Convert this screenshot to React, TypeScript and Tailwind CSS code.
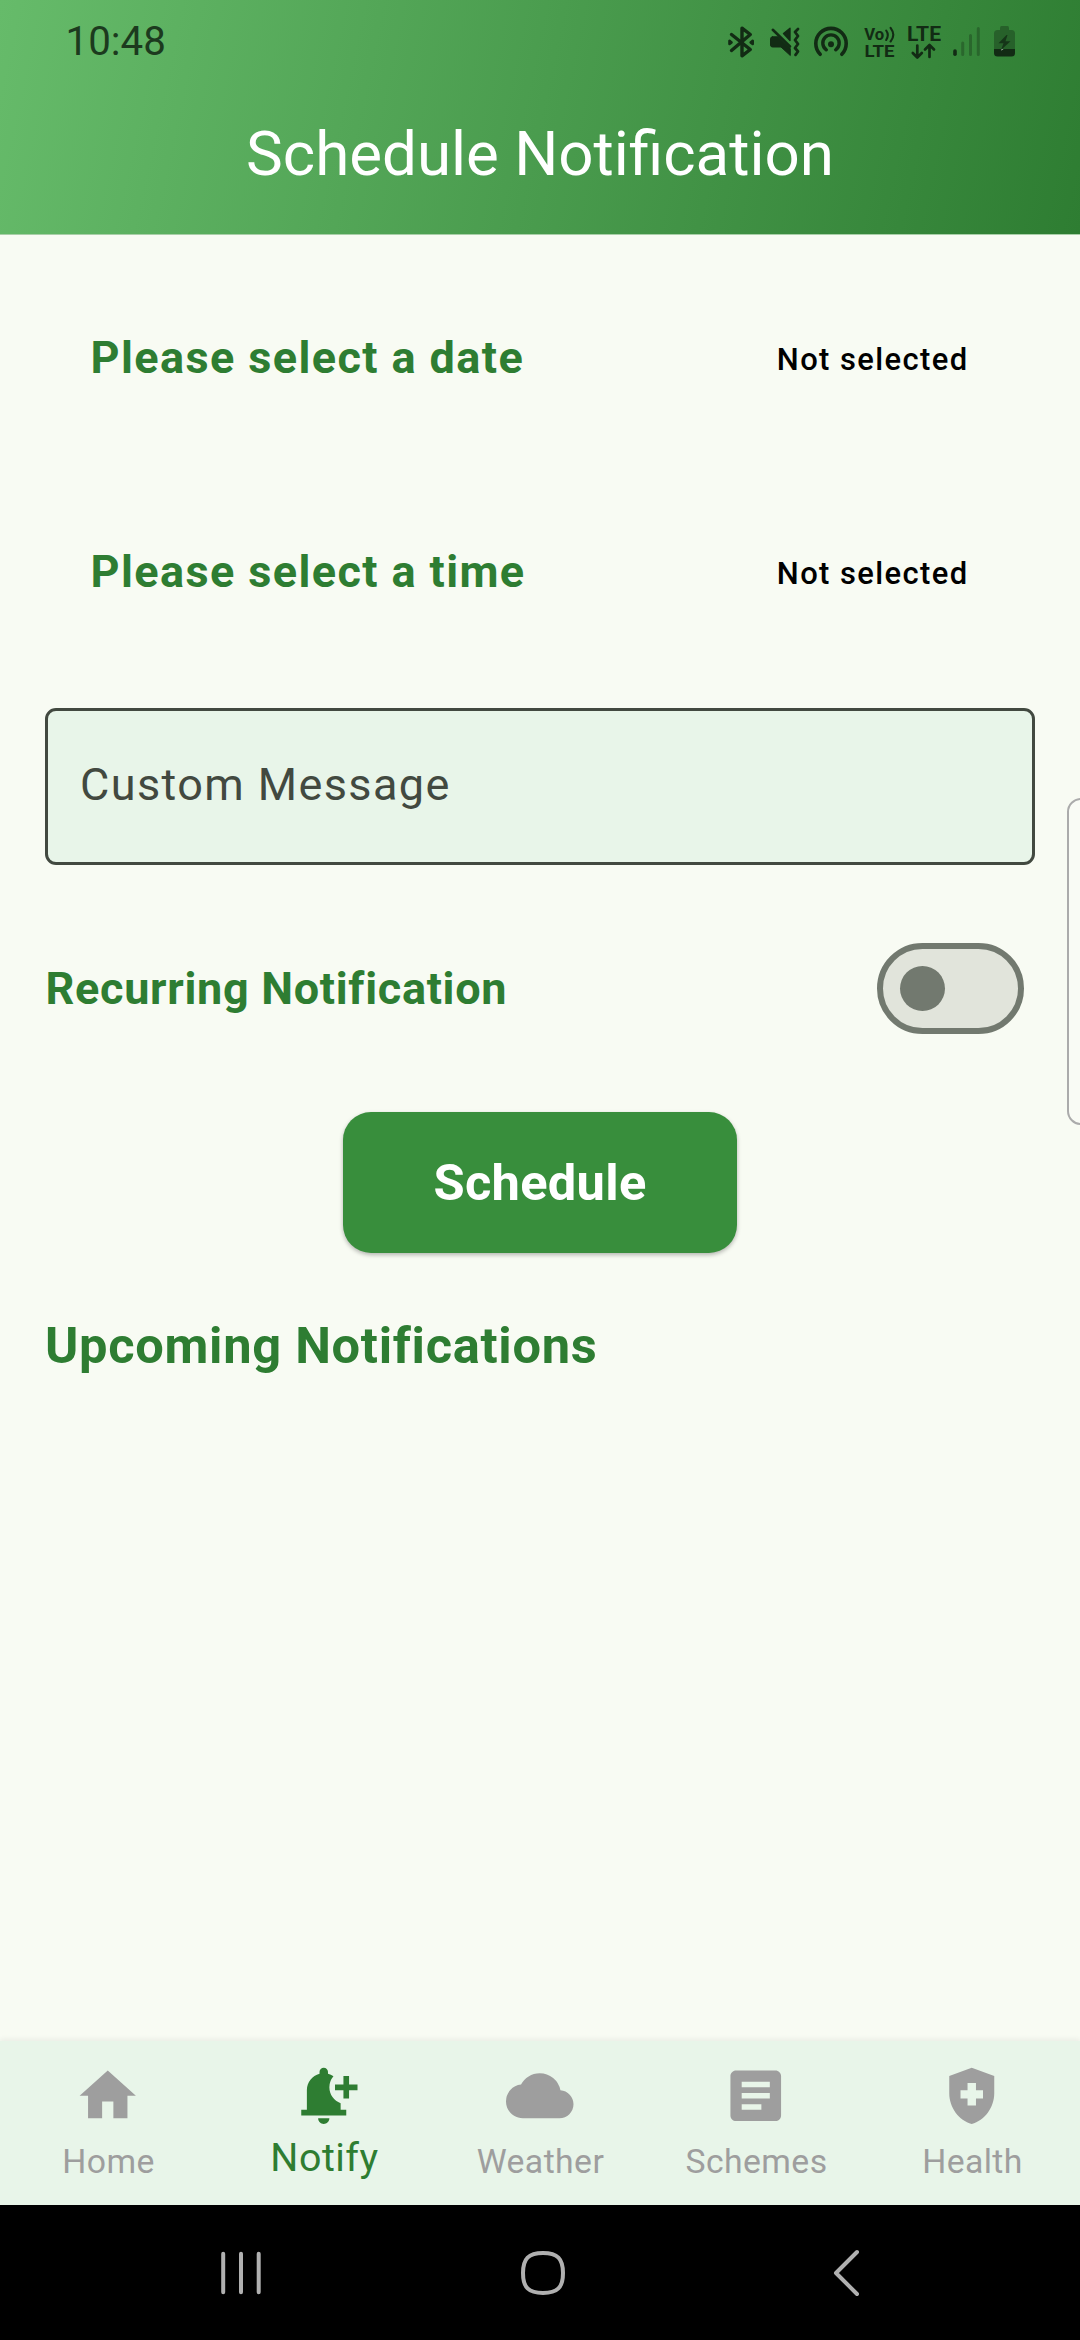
import type { ReactNode } from "react";
import {
  MdArticle,
  MdCloud,
  MdHealthAndSafety,
  MdHome,
  MdNotificationAdd,
} from "react-icons/md";

function StatusIcons() {
  return (
    <div className="mt-[22px] flex h-10 text-[#122b14]">
      {/* Bluetooth */}
      <svg width="28" height="40" viewBox="727 22 28 40" fill="none" stroke="currentColor" strokeWidth="3.4" strokeLinecap="round" strokeLinejoin="round">
        <path d="M731.5 34.5 L750.3 49.5 L742 55.800 V28.200 L750.3 34.5 L731.5 50.5" />
        <path d="M729.5 40.8 V44 L731.5 42.4 Z M752.700 40.8 V44 L750.7 42.4 Z" strokeWidth="2.6" />
      </svg>
      {/* Muted with vibration */}
      <svg className="ml-[14px]" width="32" height="40" viewBox="769 22 32 40" fill="none" stroke="currentColor" strokeLinecap="round" strokeLinejoin="round">
        <path d="M772.500 36.800 H778 L790.300 48.500 V55.500 L781 47 H772.500 Q770.5 47 770.5 45 V38.800 Q770.5 36.800 772.500 36.800 Z" fill="currentColor" strokeWidth="1" />
        <path d="M783.500 33.500 L790 28.300 V40.500 Z" fill="currentColor" strokeWidth="1.4" />
        <path d="M772.8 29.800 L790 46.500" strokeWidth="2.6" />
        <path d="M798 29 L795 32 L798 36 L795 40 L798 44 L795 48 L798 51.500 L795.500 54.800" strokeWidth="2.8" />
      </svg>
      {/* Hotspot */}
      <svg className="ml-[12px]" width="36" height="40" viewBox="813 22 36 40" fill="none" stroke="currentColor" strokeWidth="3.6" strokeLinecap="round">
        <circle cx="831" cy="44.300" r="3" fill="currentColor" stroke="none" />
        <path d="M820.200 54.600 A15.200 15.200 0 1 1 841.800 54.600" transform="translate(0 -.3)" />
        <path d="M826.300 49.800 A8.200 8.200 0 1 1 835.700 49.800" strokeWidth="3.400" />
      </svg>
      {/* VoLTE */}
      <svg className="ml-[14px]" width="34" height="40" viewBox="863 22 34 40" fill="currentColor">
        <text x="864.200" y="40" fontSize="17" fontWeight="700" fontFamily="Roboto, sans-serif" textLength="20" lengthAdjust="spacingAndGlyphs">Vo</text>
        <text x="864.500" y="57" fontSize="17" fontWeight="700" fontFamily="Roboto, sans-serif" textLength="30" lengthAdjust="spacingAndGlyphs">LTE</text>
        <path d="M886.200 30.500 Q889.400 35 886.200 40 M890.600 27.800 Q896 35 890.600 41.500" fill="none" stroke="currentColor" strokeWidth="2.100" strokeLinecap="round" />
      </svg>
      {/* LTE data */}
      <svg className="ml-[10px]" width="34" height="40" viewBox="907 22 34 40" fill="currentColor">
        <text x="907" y="41" fontSize="20.500" fontWeight="700" fontFamily="Roboto, sans-serif" textLength="34" lengthAdjust="spacingAndGlyphs">LTE</text>
        <path d="M917.300 45.500 V57 M912.800 53 L917.300 57.500 L921.800 53 M929.500 57 V45.500 M925 49.500 L929.500 45 L934 49.500" fill="none" stroke="currentColor" strokeWidth="2.700" strokeLinecap="round" strokeLinejoin="round" />
      </svg>
      {/* Signal strength */}
      <svg className="ml-[11px]" width="29" height="40" viewBox="952 22 29 40" stroke="currentColor" strokeWidth="3" strokeLinecap="round">
        <path d="M955 51 V54.300" strokeWidth="3.600" />
        <path d="M962.700 43 V54.500 M970.500 35.500 V54.500 M978.300 28.500 V54.500" opacity=".33" />
      </svg>
      {/* Battery, charging */}
      <svg className="ml-[12px]" width="23" height="40" viewBox="993 22 23 40" fill="currentColor">
        <path d="M1001.500 26 H1007.500 Q1009 26 1009 28 V30 H1011.500 Q1015 30 1015 33.500 V49 H994 V33.500 Q994 30 997.500 30 H1000 V28 Q1000 26 1001.500 26 Z" opacity=".38" />
        <path d="M994 49 H1015 V53 Q1015 56.500 1011.500 56.500 H997.500 Q994 56.500 994 53 Z" />
        <path d="M1006.500 35 L998.500 43.200 H1003.500 L1001 50 L1010.500 41.200 H1005.500 L1007.500 35 Z" opacity=".8" />
        <path d="M1001 50.800 L1001.700 49 H1003.500 Z" fill="#b9c9ba" />
      </svg>
    </div>
  );
}

function PickerRow({ label, value }: { label: string; value: string }) {
  return (
    <div className="flex h-[214px] items-center justify-between pl-[45.500px] pr-[66.500px]">
      <span className="-mt-px text-[45px] leading-none font-bold tracking-[1.4px] text-[#2e7d32]">{label}</span>
      <span className="mt-1 text-[30.940px] leading-none font-medium tracking-[1.4px] text-black">{value}</span>
    </div>
  );
}

function NavItem({ icon, label, active = false }: { icon: ReactNode; label: string; active?: boolean }) {
  return (
    <button className={active ? "flex w-[216px] flex-col items-center text-[#2e7d32]" : "flex w-[216px] flex-col items-center text-[#9e9e9e]"}>
      <span className="mt-[20.500px] text-[67.500px] leading-none">{icon}</span>
      <span
        className={
          active
            ? "mt-[4.500px] pl-[1px] text-[39.375px] leading-[48px] tracking-[0.5px]"
            : "mt-[8.500px] pl-[1px] text-[33.750px] leading-[48px] tracking-[0.42px]"
        }
      >
        {label}
      </span>
    </button>
  );
}

export default function App() {
  return (
    <div className="relative flex h-[2340px] w-[1080px] flex-col overflow-hidden bg-[#f8fbf3] font-['Roboto',sans-serif]">
      <header className="h-[234px] shrink-0 bg-[linear-gradient(102.2deg,#66bb6a,#2e7d32)]">
        <div className="flex h-[75px] items-start justify-between pl-[65.500px] pr-[64px]">
          <span className="mt-[22px] text-[40.300px] leading-[40px] text-[#1c3a1e]">10:48</span>
          <StatusIcons />
        </div>
        <h1 className="flex h-[159px] items-center justify-center text-[61.875px] leading-none text-white">
          Schedule Notification
        </h1>
      </header>

      <div className="h-px shrink-0 bg-[#a9cfa8]" />

      <main className="flex flex-1 flex-col px-[45px] pt-[16px]">
        <PickerRow label="Please select a date" value="Not selected" />
        <PickerRow label="Please select a time" value="Not selected" />

        <div className="mt-[29px] flex h-[157px] shrink-0 items-center rounded-[11px] border-3 border-[#424940] bg-[#e8f5e9] px-[32px] pb-[4px] text-[45px] leading-none tracking-[1.4px] text-[#424940]">
          Custom Message
        </div>

        <div className="mt-[78px] flex h-[91px] items-center justify-between pr-[11px]">
          <span className="pl-[0.500px] text-[45px] leading-none font-bold tracking-[0.7px] text-[#2e7d32]">
            Recurring Notification
          </span>
          <button className="flex h-[91px] w-[147px] items-center rounded-full border-[6px] border-[#72796f] bg-[#e1e4db] pl-[17px]">
            <span className="size-[45px] rounded-full bg-[#72796f]" />
          </button>
        </div>

        <button className="mt-[78px] flex h-[141px] w-[394px] items-center justify-center self-center rounded-[28px] bg-[#388e3c] pt-[1px] text-[50.625px] leading-none font-bold tracking-[0.280px] text-white shadow-[0_2px_4px_rgba(0,0,0,0.28)]">
          Schedule
        </button>

        <h2 className="mt-[67px] text-[50.625px] leading-[52px] font-bold tracking-[0.7px] text-[#2e7d32]">
          Upcoming Notifications
        </h2>
      </main>

      <nav className="flex h-[164px] shrink-0 bg-[#e8f5e9] shadow-[0_-2px_5px_rgba(0,0,0,0.06)]">
        <NavItem icon={<MdHome />} label="Home" />
        <NavItem icon={<MdNotificationAdd />} label="Notify" active />
        <NavItem icon={<MdCloud />} label="Weather" />
        <NavItem icon={<MdArticle />} label="Schemes" />
        <NavItem icon={<MdHealthAndSafety />} label="Health" />
      </nav>

      <footer className="flex h-[135px] shrink-0 items-center bg-black pl-[219px] text-[#b0b0b0]">
        <svg width="44" height="48" viewBox="0 0 44 48" stroke="currentColor" strokeWidth="4" strokeLinecap="round">
          <path d="M4.200 4.700 V43.300 M22 4.700 V43.300 M39.700 4.700 V43.300" />
        </svg>
        <svg className="ml-[256px]" width="48" height="48" viewBox="0 0 48 48" fill="none" stroke="currentColor" strokeWidth="4">
          <path d="M24 4 C38.500 4 44 9.500 44 24 C44 38.500 38.500 44 24 44 C9.500 44 4 38.500 4 24 C4 9.500 9.500 4 24 4 Z" />
        </svg>
        <svg className="ml-[264px]" width="30" height="50" viewBox="0 0 30 50" fill="none" stroke="currentColor" strokeWidth="4" strokeLinecap="round" strokeLinejoin="round">
          <path d="M26 4 L5 25 L26 46" />
        </svg>
      </footer>

      {/* Edge panel handle */}
      <div className="absolute top-[798px] left-[1067px] h-[327px] w-[40px] rounded-[14px] border-[2.500px] border-[#ababab] bg-[#f9fbf5]" />
    </div>
  );
}
